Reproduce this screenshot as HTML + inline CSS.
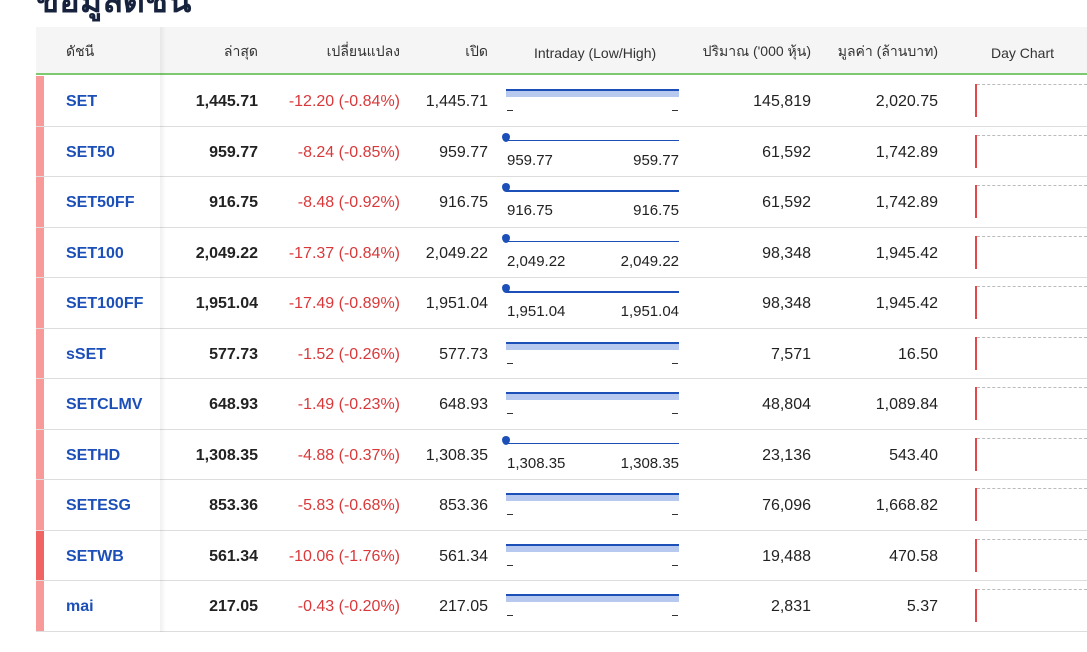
<!DOCTYPE html>
<html><head><meta charset="utf-8"><style>
*{margin:0;padding:0;box-sizing:border-box}
body{width:1087px;height:652px;background:#fff;position:relative;overflow:hidden;font-family:"Liberation Sans","Noto Sans CJK SC",sans-serif;color:#222}
.title{position:absolute;left:36px;top:-27px;font-size:34px;font-weight:bold;color:#17233d;font-family:"Liberation Sans","Noto Sans CJK SC",sans-serif}
.hdr{position:absolute;left:36px;top:27px;width:1051px;height:48px;background:#f5f5f5;border-bottom:2px solid #7cc96f;font-size:14px;color:#333}
.hdr span{position:absolute;top:15px;white-space:nowrap;line-height:18px}
.hdr span.en{top:17px}
.shadow{position:absolute;left:160px;top:27px;width:6px;height:605px;background:linear-gradient(to right,rgba(0,0,0,0.06),rgba(0,0,0,0));}
.row{position:absolute;left:36px;width:1051px;height:50.5px;border-bottom:1px solid #ddd;font-size:16px}
.row .st{position:absolute;left:0;top:0;width:8px;height:100%;background:#f99a9a}
.row span{position:absolute;top:17px;white-space:nowrap}
.nm{left:30px;color:#1c4fb8;font-weight:bold}
.la{right:829px;font-weight:bold;color:#222}
.ch{right:687px;color:#d9383a}
.op{right:599px}
.vo{right:276px}
.va{right:149px}
.bl{position:absolute;left:470px;width:173px;top:13px;height:2px;background:#1c4fb8}
.bf{position:absolute;left:470px;width:173px;top:15px;height:6px;background:#b7c9ee}
.d1{position:absolute;left:471px;top:34px;width:6px;height:1px;background:#333}
.d2{position:absolute;left:636px;top:34px;width:6px;height:1px;background:#333}
.ll{position:absolute;left:470px;width:173px;top:13px;height:1.5px;background:#1c4fb8}
.dot{position:absolute;left:466px;top:6px;width:8px;height:9px;border-radius:50% 50% 50% 50%/40% 40% 60% 60%;background:#1c4fb8}
.row span.lo{left:471px;top:25px;font-size:15px}
.row span.hi{right:408px;top:25px;font-size:15px}
.rv{position:absolute;left:939px;top:8px;width:2px;height:33px;background:#e04a4a}
.dl{position:absolute;left:941px;top:8px;width:110px;border-top:1px dashed #bbb}
</style></head><body>
<div class="title">ข้อมูลดัชนี</div>
<div class="hdr">
<span style="left:30px">ดัชนี</span>
<span style="right:829px">ล่าสุด</span>
<span style="right:687px">เปลี่ยนแปลง</span>
<span style="right:599px">เปิด</span>
<span class="en" style="left:498px">Intraday (Low/High)</span>
<span style="right:276px">ปริมาณ ('000 หุ้น)</span>
<span style="right:149px">มูลค่า (ล้านบาท)</span>
<span class="en" style="left:955px">Day Chart</span>
</div>

<div class="row" style="top:76px"><div class="st"></div><span class="nm">SET</span><span class="la">1,445.71</span><span class="ch">-12.20 (-0.84%)</span><span class="op">1,445.71</span><div class="bl"></div><div class="bf"></div><div class="d1"></div><div class="d2"></div><span class="vo">145,819</span><span class="va">2,020.75</span><div class="rv"></div><div class="dl"></div></div>
<div class="row" style="top:126.5px"><div class="st"></div><span class="nm">SET50</span><span class="la">959.77</span><span class="ch">-8.24 (-0.85%)</span><span class="op">959.77</span><div class="ll"></div><div class="dot"></div><span class="lo">959.77</span><span class="hi">959.77</span><span class="vo">61,592</span><span class="va">1,742.89</span><div class="rv"></div><div class="dl"></div></div>
<div class="row" style="top:177px"><div class="st"></div><span class="nm">SET50FF</span><span class="la">916.75</span><span class="ch">-8.48 (-0.92%)</span><span class="op">916.75</span><div class="ll"></div><div class="dot"></div><span class="lo">916.75</span><span class="hi">916.75</span><span class="vo">61,592</span><span class="va">1,742.89</span><div class="rv"></div><div class="dl"></div></div>
<div class="row" style="top:227.5px"><div class="st"></div><span class="nm">SET100</span><span class="la">2,049.22</span><span class="ch">-17.37 (-0.84%)</span><span class="op">2,049.22</span><div class="ll"></div><div class="dot"></div><span class="lo">2,049.22</span><span class="hi">2,049.22</span><span class="vo">98,348</span><span class="va">1,945.42</span><div class="rv"></div><div class="dl"></div></div>
<div class="row" style="top:278px"><div class="st"></div><span class="nm">SET100FF</span><span class="la">1,951.04</span><span class="ch">-17.49 (-0.89%)</span><span class="op">1,951.04</span><div class="ll"></div><div class="dot"></div><span class="lo">1,951.04</span><span class="hi">1,951.04</span><span class="vo">98,348</span><span class="va">1,945.42</span><div class="rv"></div><div class="dl"></div></div>
<div class="row" style="top:328.5px"><div class="st"></div><span class="nm">sSET</span><span class="la">577.73</span><span class="ch">-1.52 (-0.26%)</span><span class="op">577.73</span><div class="bl"></div><div class="bf"></div><div class="d1"></div><div class="d2"></div><span class="vo">7,571</span><span class="va">16.50</span><div class="rv"></div><div class="dl"></div></div>
<div class="row" style="top:379px"><div class="st"></div><span class="nm">SETCLMV</span><span class="la">648.93</span><span class="ch">-1.49 (-0.23%)</span><span class="op">648.93</span><div class="bl"></div><div class="bf"></div><div class="d1"></div><div class="d2"></div><span class="vo">48,804</span><span class="va">1,089.84</span><div class="rv"></div><div class="dl"></div></div>
<div class="row" style="top:429.5px"><div class="st"></div><span class="nm">SETHD</span><span class="la">1,308.35</span><span class="ch">-4.88 (-0.37%)</span><span class="op">1,308.35</span><div class="ll"></div><div class="dot"></div><span class="lo">1,308.35</span><span class="hi">1,308.35</span><span class="vo">23,136</span><span class="va">543.40</span><div class="rv"></div><div class="dl"></div></div>
<div class="row" style="top:480px"><div class="st"></div><span class="nm">SETESG</span><span class="la">853.36</span><span class="ch">-5.83 (-0.68%)</span><span class="op">853.36</span><div class="bl"></div><div class="bf"></div><div class="d1"></div><div class="d2"></div><span class="vo">76,096</span><span class="va">1,668.82</span><div class="rv"></div><div class="dl"></div></div>
<div class="row" style="top:530.5px"><div class="st" style="background:#f06464"></div><span class="nm">SETWB</span><span class="la">561.34</span><span class="ch">-10.06 (-1.76%)</span><span class="op">561.34</span><div class="bl"></div><div class="bf"></div><div class="d1"></div><div class="d2"></div><span class="vo">19,488</span><span class="va">470.58</span><div class="rv"></div><div class="dl"></div></div>
<div class="row" style="top:581px"><div class="st"></div><span class="nm">mai</span><span class="la">217.05</span><span class="ch">-0.43 (-0.20%)</span><span class="op">217.05</span><div class="bl"></div><div class="bf"></div><div class="d1"></div><div class="d2"></div><span class="vo">2,831</span><span class="va">5.37</span><div class="rv"></div><div class="dl"></div></div>
<div class="shadow"></div>
</body></html>
